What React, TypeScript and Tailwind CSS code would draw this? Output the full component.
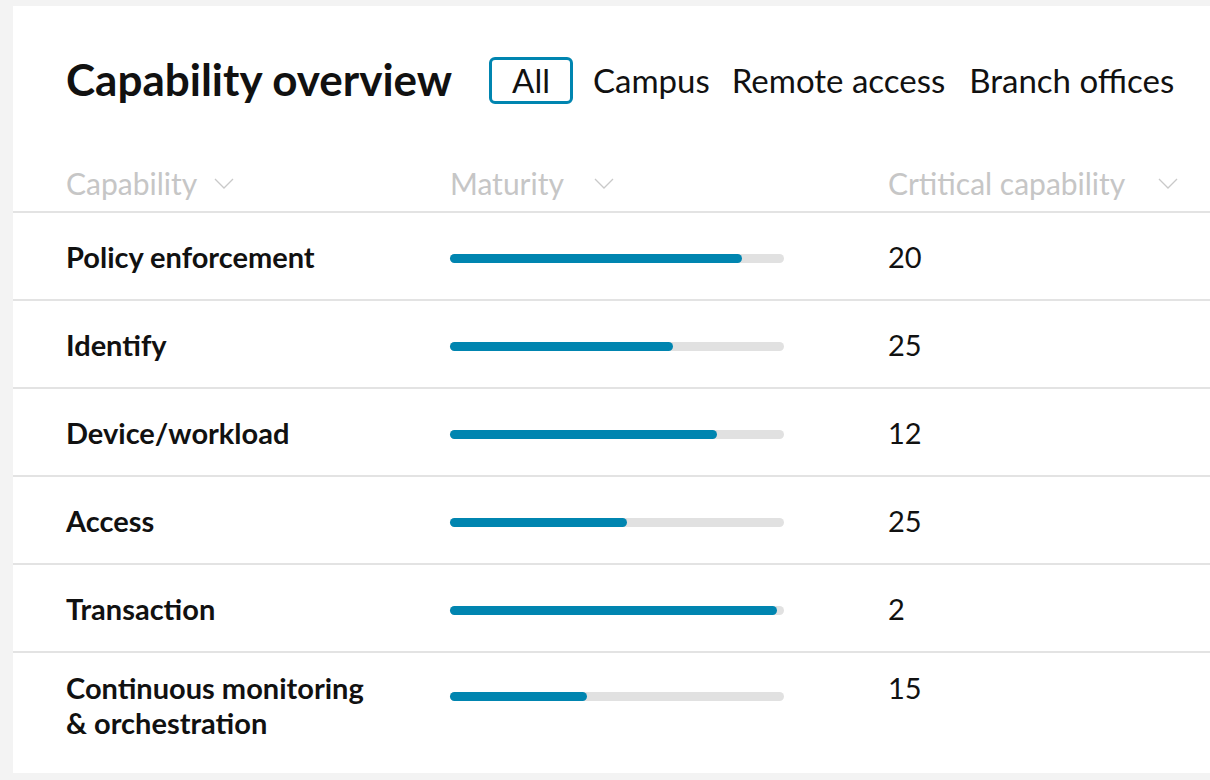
import React from 'react';

const rows = [
  { name: 'Policy enforcement', pct: 0.874, count: 20 },
  { name: 'Identify', pct: 0.668, count: 25 },
  { name: 'Device/workload', pct: 0.8, count: 12 },
  { name: 'Access', pct: 0.53, count: 25 },
  { name: 'Transaction', pct: 0.98, count: 2 },
];

const Chevron: React.FC<{ className?: string }> = ({ className }) => (
  <svg width="20" height="11" viewBox="0 0 20 11" fill="none" className={className}>
    <path d="M1 1l9 9 9-9" stroke="#c9c9c9" strokeWidth="1.3" />
  </svg>
);

const Bar: React.FC<{ pct: number; className?: string }> = ({ pct, className }) => (
  <div className={`h-[9px] w-[334px] rounded-full bg-[#e1e1e1] ${className ?? ''}`}>
    <div className="h-full rounded-full bg-[#0085b0]" style={{ width: `${pct * 100}%` }} />
  </div>
);

const App: React.FC = () => {
  return (
    <div className="min-h-[780px] bg-[#f3f3f3] pt-[6px] pl-[13px] pb-[7px] font-['Lato','Liberation_Sans',sans-serif] text-[#111]">
      <div className="bg-white pb-[33px]">
        <div className="flex items-start pl-[53px] pt-[47px]">
          <h1 className="text-[44px] font-bold leading-[52px]">Capability overview</h1>
          <div className="ml-[37px] mt-[4px] flex items-center text-[33px] leading-[37px]">
            <button className="rounded-[6px] border-[3px] border-[#0085b0] px-[20px] py-[2px]">All</button>
            <span className="ml-[20px]">Campus</span>
            <span className="ml-[22px]">Remote access</span>
            <span className="ml-[24px]">Branch offices</span>
          </div>
        </div>

        <div className="mt-[60px] grid grid-cols-[384px_438px_1fr] border-b-2 border-[#e3e3e3] pb-[10px] pl-[53px] text-[30px] leading-[36px] text-[#c6c6c6]">
          <div className="flex items-center">
            Capability
            <Chevron className="ml-[17px]" />
          </div>
          <div className="flex items-center">
            Maturity
            <Chevron className="ml-[30px]" />
          </div>
          <div className="flex items-center">
            Crtitical capability
            <Chevron className="ml-[33px]" />
          </div>
        </div>

        {rows.map((r) => (
          <div
            key={r.name}
            className="grid h-[88px] grid-cols-[384px_438px_1fr] items-center border-b-2 border-[#e3e3e3] pl-[53px] text-[29px] leading-[35px]"
          >
            <div className="font-bold">{r.name}</div>
            <Bar pct={r.pct} className="mt-[4px]" />
            <div>{r.count}</div>
          </div>
        ))}

        <div className="grid grid-cols-[384px_438px_1fr] items-start pl-[53px] pt-[17px] text-[29px] leading-[35px]">
          <div className="font-bold">
            Continuous monitoring
            <br />& orchestration
          </div>
          <Bar pct={0.41} className="mt-[22px]" />
          <div>15</div>
        </div>
      </div>
    </div>
  );
};

export default App;
